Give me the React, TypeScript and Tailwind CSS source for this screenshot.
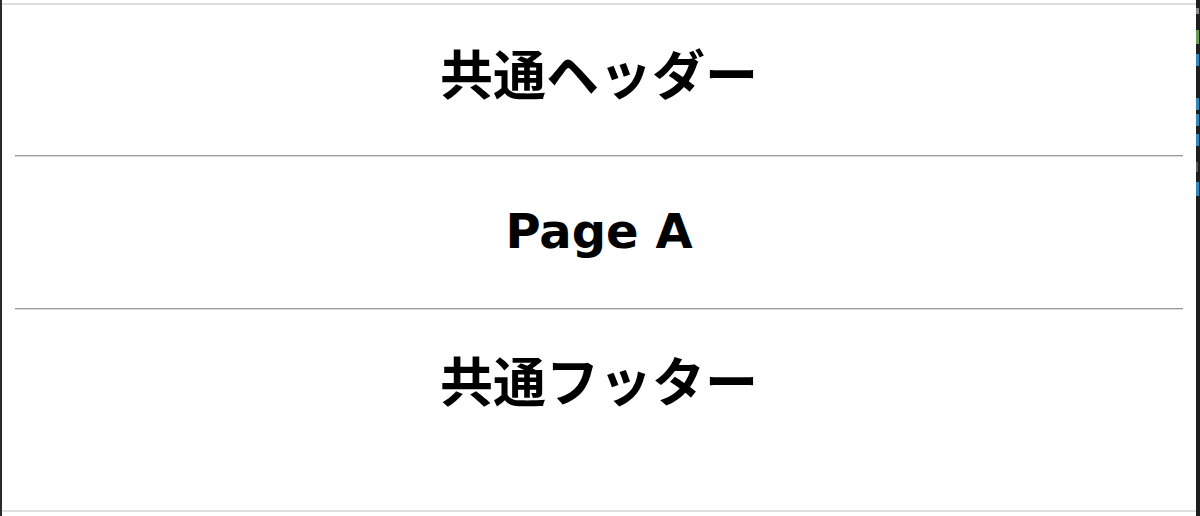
export default function App() {
  const sections = ["共通ヘッダー", "Page A", "共通フッター"];

  return (
    <div
      className="flex h-[516px] w-[1200px] overflow-hidden bg-white text-black"
      style={{ fontFamily: '"DejaVu Sans", "Noto Sans CJK JP", sans-serif' }}
    >
      {/* left window edge */}
      <div className="w-[2px] shrink-0 bg-[#2b2b2b]" />

      <div className="flex flex-1 flex-col">
        <div className="h-[3px] shrink-0" />
        <div className="h-[2px] shrink-0 bg-[#dedede]" />

        <main className="flex flex-1 flex-col px-[13px]">
          <header className="flex h-[150px] items-center justify-center pb-[8px]">
            <h1 className="text-[53px] font-bold leading-none">{sections[0]}</h1>
          </header>
          <hr className="border-t border-b border-t-[#9a9a9a] border-b-[#dcdcdc]" />
          <section className="flex h-[151px] items-center justify-center pb-[4px]">
            <h1 className="text-[48px] font-bold leading-none">{sections[1]}</h1>
          </section>
          <hr className="border-t border-b border-t-[#9a9a9a] border-b-[#dcdcdc]" />
          <footer className="flex flex-1 justify-center pt-[47px]">
            <h1 className="text-[53px] font-bold leading-none">{sections[2]}</h1>
          </footer>
        </main>

        <div className="h-[2px] shrink-0 bg-[#e0e0e0]" />
        <div className="h-[4px] shrink-0" />
      </div>

      {/* editor pane peeking in at the right */}
      <div className="flex w-[4px] shrink-0 flex-col bg-[#1e1e1e] pt-[8px]">
        <div className="h-[6px] w-[3px] bg-[#8a8a8a]" />
        <div className="mt-[16px] h-[14px] w-[3px] bg-[#6a9955]" />
        <div className="mt-[10px] h-[12px] w-[3px] bg-[#2f86b8]" />
        <div className="mt-[32px] h-[12px] w-[3px] bg-[#2f86b8]" />
        <div className="mt-[4px] h-[12px] w-[3px] bg-[#2f86b8]" />
        <div className="mt-[8px] h-[12px] w-[3px] bg-[#2f86b8]" />
        <div className="mt-[16px] h-[10px] w-[2px] bg-[#5a5a5a]" />
        <div className="mt-[10px] h-[14px] w-[3px] bg-[#2f86b8]" />
      </div>
    </div>
  );
}
